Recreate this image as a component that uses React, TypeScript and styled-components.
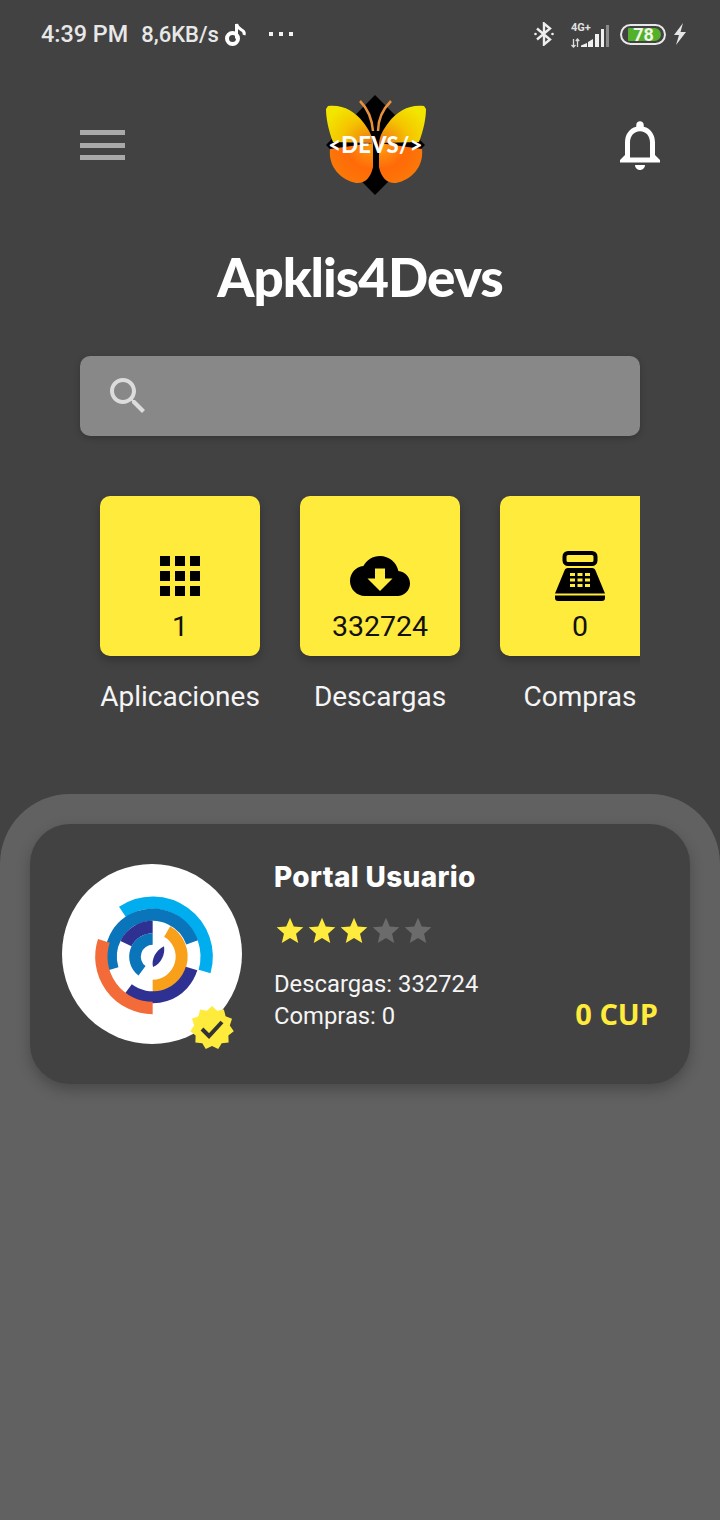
import React from "react";
import styled, { createGlobalStyle } from "styled-components";

const Global = createGlobalStyle`
  html, body { margin: 0; padding: 0; background: #424242; }
  * { box-sizing: border-box; }
`;

const Page = styled.div`
  width: 720px;
  height: 1520px;
  background: #424242;
  display: flex;
  flex-direction: column;
  overflow: hidden;
  font-family: Roboto, "Liberation Sans", sans-serif;
`;

const StatusBar = styled.div`
  height: 68px;
  display: flex;
  align-items: center;
  padding: 0 32px 0 41px;
  color: #e8e8e8;
  font-size: 22px;
  font-weight: 500;
`;

const StatusText = styled.span<{ $gap?: number; $size?: number }>`
  margin-right: ${(p) => p.$gap ?? 0}px;
  font-size: ${(p) => p.$size ?? 22}px;
  white-space: nowrap;
`;

const Spacer = styled.div`
  flex: 1;
`;

const Dots = styled.div`
  display: flex;
  gap: 6px;
  margin: 0 0 0 22px;
`;

const Dot = styled.i`
  width: 4px;
  height: 4px;
  background: #f2f2f2;
`;

const NetWrap = styled.div`
  width: 38px;
  height: 30px;
  position: relative;
  margin: 0 11px 0 17px;
`;

const NetLabel = styled.span`
  position: absolute;
  left: 0;
  top: 3px;
  font-size: 11px;
  line-height: 11px;
  font-weight: 700;
  color: #e0e0e0;
`;

const Battery = styled.div`
  width: 46px;
  height: 21px;
  border: 2px solid #e8e8e8;
  border-radius: 11px;
  padding: 2px;
  position: relative;
  margin-right: 6px;
`;

const BatteryFill = styled.div`
  height: 100%;
  width: 86%;
  margin-left: 4px;
  background: #53b02b;
  border-radius: 1px 7px 7px 1px;
`;

const BatteryText = styled.span`
  position: absolute;
  left: 8px;
  top: -3px;
  width: 27px;
  text-align: center;
  font-size: 18px;
  line-height: 23px;
  font-weight: 700;
  color: #f0f5e6;
`;

const Header = styled.header`
  display: grid;
  grid-template-columns: 220px 310px 60px;
  align-items: center;
  padding: 17px 0 0 80px;
`;

const Burger = styled.div`
  width: 45px;
  display: flex;
  flex-direction: column;
  gap: 7.5px;
`;

const BurgerBar = styled.span`
  display: block;
  height: 5px;
  background: #a9a9a9;
`;

const LogoWrap = styled.div`
  width: 150px;
  height: 120px;
  position: relative;
`;

const LogoText = styled.span`
  position: absolute;
  left: 0;
  right: 0;
  top: 47px;
  text-align: center;
  font-family: Lato, sans-serif;
  font-weight: 900;
  font-size: 22px;
  letter-spacing: 0.3px;
  line-height: 26px;
  color: #fff;
  margin-left: 1px;
`;

const BellBox = styled.div`
  width: 60px;
  height: 60px;
`;

const Title = styled.h1`
  margin: 37px 0 0;
  text-align: center;
  font-family: Lato, sans-serif;
  font-weight: 900;
  font-size: 53px;
  letter-spacing: -1px;
  line-height: 70px;
  color: #fff;
`;

const Search = styled.div`
  margin: 44px 80px 0;
  height: 80px;
  background: #888888;
  border-radius: 10px;
  box-shadow: 0 2px 6px rgba(0, 0, 0, 0.22);
  display: flex;
  align-items: center;
  padding: 0 0 0 24px;
`;

const Stats = styled.div`
  width: 560px;
  margin: 40px 0 0 80px;
  padding: 20px 0 20px 20px;
  display: flex;
  gap: 40px;
  overflow: hidden;
`;

const Stat = styled.div`
  flex: 0 0 160px;
  display: flex;
  flex-direction: column;
  align-items: center;
`;

const Tile = styled.div`
  width: 160px;
  height: 160px;
  background: #ffeb3b;
  border-radius: 10px;
  box-shadow: 0 4px 10px rgba(0, 0, 0, 0.25);
  padding-top: 50px;
  display: flex;
  flex-direction: column;
  align-items: center;
`;

const TileIcon = styled.div`
  width: 60px;
  height: 60px;
  display: flex;
  align-items: center;
  justify-content: center;
`;

const TileValue = styled.div`
  margin-top: 5px;
  font-size: 28.5px;
  line-height: 32px;
  color: #111;
`;

const StatLabel = styled.div`
  margin-top: 25px;
  font-size: 28px;
  line-height: 32px;
  color: #f5f5f5;
  white-space: nowrap;
`;

const Sheet = styled.section`
  flex: 1;
  margin-top: 61px;
  padding: 30px;
  background: #616161;
  border-radius: 70px 70px 0 0;
`;

const Card = styled.article`
  height: 260px;
  background: #424242;
  border-radius: 40px;
  box-shadow: 0 6px 14px rgba(0, 0, 0, 0.25);
  padding: 40px 32px;
  display: flex;
  align-items: flex-start;
  gap: 32px;
`;

const Avatar = styled.div`
  flex: 0 0 180px;
  height: 180px;
  background: #fff;
  border-radius: 50%;
  position: relative;
`;

const Badge = styled.div`
  position: absolute;
  left: 128px;
  top: 142px;
  width: 44px;
  height: 44px;
`;

const Info = styled.div`
  flex: 1;
  margin-top: -5px;
`;

const CardTitle = styled.h2`
  margin: 0;
  font-family: Inter, sans-serif;
  font-weight: 800;
  font-size: 28px;
  letter-spacing: 0.35px;
  line-height: 36px;
  color: #fff;
`;

const StarRow = styled.div`
  display: flex;
  margin: 20px 0 0 0;
`;

const InfoFooter = styled.div`
  margin-top: 21px;
  display: flex;
  justify-content: space-between;
  align-items: flex-end;
`;

const Meta = styled.div`
  font-size: 23.8px;
  line-height: 32px;
  color: #f5f5f5;
`;

const Price = styled.div`
  font-family: "Open Sans", sans-serif;
  font-weight: 700;
  font-size: 29px;
  line-height: 36px;
  color: #ffeb3b;
`;

const Filled = styled.svg`
  display: block;
`;

const polar = (cx: number, cy: number, r: number, deg: number) => {
  const a = ((deg - 90) * Math.PI) / 180;
  return `${(cx + r * Math.cos(a)).toFixed(2)} ${(cy + r * Math.sin(a)).toFixed(2)}`;
};

const Arc = ({ r, w, from, to, color }: { r: number; w: number; from: number; to: number; color: string }) => (
  <path
    d={`M${polar(308, 305, r, from)} A${r} ${r} 0 ${to - from > 180 ? 1 : 0} 1 ${polar(308, 305, r, to)}`}
    fill="none"
    stroke={color}
    strokeWidth={w}
  />
);

const AppLogo = () => (
  <Filled width="180" height="180" viewBox="36 27 540 540">
    <Arc r={162} w={37} from={-34} to={106} color="#00aeef" />
    <Arc r={126} w={37} from={-107} to={70} color="#0b75bb" />
    <Arc r={89} w={37} from={-64} to={0} color="#2e3192" />
    <Arc r={53} w={35} from={-143} to={0} color="#0b75bb" />
    <Arc r={87} w={36} from={30} to={180} color="#f9a01b" />
    <Arc r={122} w={36} from={107} to={217} color="#2e3192" />
    <Arc r={154} w={37} from={180} to={288} color="#f26b38" />
    <path d="M342 274 C346 298 334 326 309 336 C303 312 318 286 342 274Z" fill="#2e3192" />
  </Filled>
);

const starburst = (() => {
  const pts: string[] = [];
  const n = 11;
  for (let i = 0; i < n * 2; i++) {
    const r = i % 2 === 0 ? 22 : 18;
    const a = (i * Math.PI) / n - Math.PI / 2;
    pts.push(`${(22 + r * Math.cos(a)).toFixed(2)},${(22 + r * Math.sin(a)).toFixed(2)}`);
  }
  return pts.join(" ");
})();

const Star = ({ on }: { on: boolean }) => (
  <Filled width="32" height="32" viewBox="0 0 24 24">
    <path
      d="M12 17.27L18.18 21l-1.64-7.03L22 9.24l-7.19-.61L12 2 9.19 8.63 2 9.24l5.46 4.73L5.82 21z"
      fill={on ? "#ffeb3b" : "#6b6b6b"}
    />
  </Filled>
);

const WingPair = () => (
  <>
    <path d="M28 21C42 19 55 26 63 37 69 45 72 50 73 58L33 57C28 44 26 32 26 24z" fill="url(#up)" />
    <path d="M30 64L73 58 73 82C71 93 64 99 56 98 41 95 28 82 30 64z" fill="url(#low)" />
  </>
);

export default function App() {
  return (
    <Page>
      <Global />
      <StatusBar>
        <StatusText $gap={13} $size={23.4}>4:39 PM</StatusText>
        <StatusText $gap={6}>8,6KB/s</StatusText>
        <Filled width="22" height="26" viewBox="0 0 22 26">
          <circle cx="7.500" cy="17.500" r="5.500" fill="none" stroke="#fff" strokeWidth="4" />
          <path d="M11.500 17.500V3c1 4 3.500 5 6 6.500 1.800 1.200 2 3 1.500 4.500" fill="none" stroke="#fff" strokeWidth="3" />
        </Filled>
        <Dots>
          <Dot />
          <Dot />
          <Dot />
        </Dots>
        <Spacer />
        <Filled width="20" height="24" viewBox="0 0 20 24">
          <path d="M3 6.500l13 11-6 5V1.500l6 5-13 11" fill="none" stroke="#eee" strokeWidth="2.400" />
          <circle cx="1.500" cy="12" r="1.300" fill="#eee" />
          <circle cx="18.500" cy="12" r="1.300" fill="#eee" />
        </Filled>
        <NetWrap>
          <NetLabel>4G+</NetLabel>
          <Filled width="38" height="30" viewBox="0 0 38 30">
            <path d="M2.500 20v8M0.500 26l2 2 2-2M6.500 28v-8M4.800 22l1.700-2 1.700 2" fill="none" stroke="#ddd" strokeWidth="1.300" />
            <path d="M10 28h6v-4l-6 2.500zM17 28h5v-8l-5 3zM24 28h4V15h-4zM30 28h3V10h-3z" fill="#f0f0f0" />
            <path d="M35 28h3V6h-3z" fill="#8a8a8a" />
          </Filled>
        </NetWrap>
        <Battery>
          <BatteryFill />
          <BatteryText>78</BatteryText>
        </Battery>
        <Filled width="16" height="22" viewBox="0 0 16 22">
          <path d="M11 0L2 12h5l-3 10 10-13H8.500z" fill="#e6e6e6" />
        </Filled>
      </StatusBar>

      <Header>
        <Burger>
          <BurgerBar />
          <BurgerBar />
          <BurgerBar />
        </Burger>
        <LogoWrap>
          <Filled width="150" height="120" viewBox="0 0 150 120">
            <defs>
              <radialGradient id="up" cx="0.95" cy="0.95" r="1.1">
                <stop offset="0" stopColor="#f07a10" />
                <stop offset="0.55" stopColor="#f5c400" />
                <stop offset="1" stopColor="#f2e600" />
              </radialGradient>
              <radialGradient id="low" cx="0.95" cy="0.1" r="1.1">
                <stop offset="0" stopColor="#ff9a10" />
                <stop offset="0.5" stopColor="#ff6a08" />
                <stop offset="1" stopColor="#fa7b08" />
              </radialGradient>
            </defs>
            <path d="M75 10L125 60 75 110 26 60z" fill="#000" />
            <path d="M60 16C68 24 72 34 73 46M91 16C83 24 78 34 78 46" fill="none" stroke="#e8903a" strokeWidth="2.500" />
            <WingPair />
            <g transform="translate(152 0) scale(-1 1)">
              <WingPair />
            </g>
          </Filled>
          <LogoText>&lt;DEVS/&gt;</LogoText>
        </LogoWrap>
        <BellBox>
          <Filled width="60" height="60" viewBox="0 0 24 24">
            <path
              d="M12 22c1.100 0 2-.9 2-2h-4c0 1.100.9 2 2 2zm6-6v-5c0-3.070-1.630-5.640-4.500-6.320V4c0-.83-.67-1.500-1.500-1.500s-1.500.67-1.500 1.500v.68C7.640 5.360 6 7.920 6 11v5l-2 2v1h16v-1l-2-2zm-2 1H8v-6c0-2.480 1.510-4.500 4-4.500s4 2.020 4 4.500v6z"
              fill="#fff"
            />
          </Filled>
        </BellBox>
      </Header>

      <Title>Apklis4Devs</Title>

      <Search>
        <Filled width="48" height="48" viewBox="0 0 24 24">
          <path
            d="M15.500 14h-.79l-.28-.27C15.410 12.590 16 11.110 16 9.500 16 5.910 13.090 3 9.500 3S3 5.910 3 9.500 5.910 16 9.500 16c1.610 0 3.090-.59 4.230-1.570l.27.28v.79l5 4.990L20.490 19l-4.990-5zm-6 0C7.010 14 5 11.990 5 9.500S7.010 5 9.500 5 14 7.010 14 9.500 11.990 14 9.500 14z"
            fill="#dcdcdc"
          />
        </Filled>
      </Search>

      <Stats>
        <Stat>
          <Tile>
            <TileIcon>
              <Filled width="40" height="40" viewBox="0 0 40 40">
                <path
                  d="M0 0h10v10H0zM15 0h10v10H15zM30 0h10v10H30zM0 15h10v10H0zM15 15h10v10H15zM30 15h10v10H30zM0 30h10v10H0zM15 30h10v10H15zM30 30h10v10H30z"
                  fill="#000"
                />
              </Filled>
            </TileIcon>
            <TileValue>1</TileValue>
          </Tile>
          <StatLabel>Aplicaciones</StatLabel>
        </Stat>
        <Stat>
          <Tile>
            <TileIcon>
              <Filled width="60" height="60" viewBox="0 0 24 24">
                <path
                  d="M19.350 10.040C18.670 6.590 15.640 4 12 4 9.110 4 6.600 5.640 5.350 8.040 2.340 8.360 0 10.910 0 14c0 3.310 2.690 6 6 6h13c2.760 0 5-2.240 5-5 0-2.640-2.050-4.780-4.650-4.960zM17 13l-5 5-5-5h3V9h4v4h3z"
                  fill="#000"
                />
              </Filled>
            </TileIcon>
            <TileValue>332724</TileValue>
          </Tile>
          <StatLabel>Descargas</StatLabel>
        </Stat>
        <Stat>
          <Tile>
            <TileIcon>
              <Filled width="50" height="50" viewBox="0 0 50 50">
                <rect x="9.500" y="2" width="31" height="11" rx="3.500" fill="none" stroke="#000" strokeWidth="4" />
                <path d="M13 17h24c2 0 3 1 3.500 2.500L50 42.500H0l9.500-23C10 18 11 17 13 17z" fill="#000" />
                <path d="M0 44.500h50v2.500c0 2-1 3-3 3H3c-2 0-3-1-3-3z" fill="#000" />
                <path
                  d="M15 22h5v3h-5zM22.500 22h5v3h-5zM30 22h5v3h-5zM15 27.500h5v3h-5zM22.500 27.500h5v3h-5zM30 27.500h5v3h-5zM15 33h5v3h-5zM22.500 33h5v3h-5zM30 33h5v3h-5z"
                  fill="#ffeb3b"
                />
              </Filled>
            </TileIcon>
            <TileValue>0</TileValue>
          </Tile>
          <StatLabel>Compras</StatLabel>
        </Stat>
      </Stats>

      <Sheet>
        <Card>
          <Avatar>
            <AppLogo />
            <Badge>
              <Filled width="44" height="44" viewBox="0 0 44 44">
                <polygon points={starburst} fill="#ffeb3b" />
                <path d="M12 23l7 7 13-14" fill="none" stroke="#333" strokeWidth="4" />
              </Filled>
            </Badge>
          </Avatar>
          <Info>
            <CardTitle>Portal Usuario</CardTitle>
            <StarRow>
              <Star on />
              <Star on />
              <Star on />
              <Star on={false} />
              <Star on={false} />
            </StarRow>
            <InfoFooter>
              <Meta>
                Descargas: 332724
                <br />
                Compras: 0
              </Meta>
              <Price>0 CUP</Price>
            </InfoFooter>
          </Info>
        </Card>
      </Sheet>
    </Page>
  );
}
